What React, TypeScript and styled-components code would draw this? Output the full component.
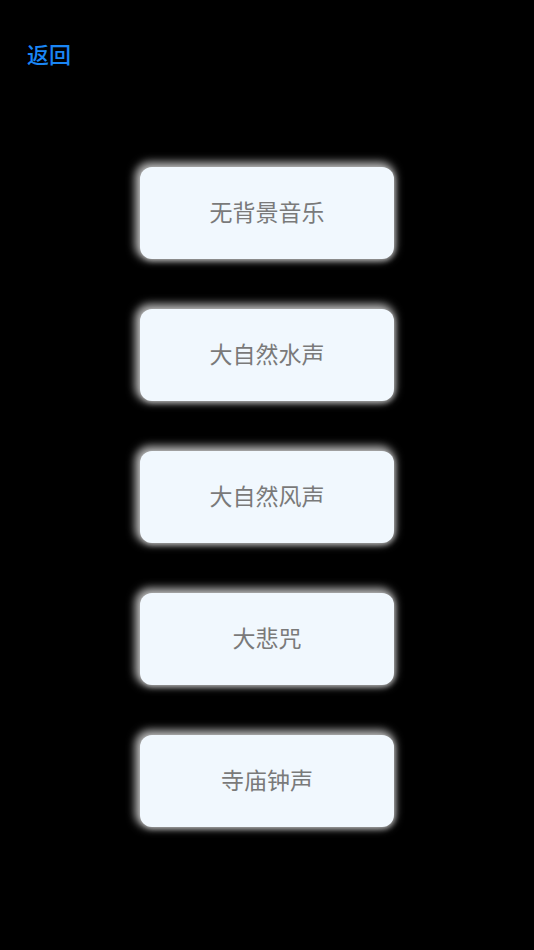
import * as React from "react";
import styled, { createGlobalStyle } from "styled-components";

const GlobalStyle = createGlobalStyle`
  html, body {
    margin: 0;
    padding: 0;
    background: #000;
  }
  body {
    font-family: "Noto Sans CJK SC", "Noto Sans", sans-serif;
  }
`;

const SPage = styled.div`
  width: 534px;
  height: 950px;
  background: #000;
  display: flex;
  flex-direction: column;
`;

const SBack = styled.button`
  align-self: flex-start;
  margin: 36px 0 0 27px;
  padding: 0;
  background: none;
  border: none;
  color: #1a86f5;
  font-family: "Noto Sans CJK SC", sans-serif;
  font-size: 22px;
  font-weight: 500;
  line-height: 34px;
`;

const SList = styled.div`
  display: flex;
  flex-direction: column;
  align-items: center;
  gap: 50px;
  margin-top: 97px;
`;

const SOption = styled.button`
  width: 254px;
  height: 92px;
  padding: 0 0 4px;
  border: none;
  border-radius: 12px;
  background: #f1f8fe;
  color: #7a7a7a;
  font-family: "Noto Sans CJK SC", sans-serif;
  font-size: 23px;
  box-shadow: -2px -2px 8px 3px rgba(255, 255, 255, 0.7),
    1px 2px 5px rgba(120, 120, 120, 0.8);
`;

const options = ["无背景音乐", "大自然水声", "大自然风声", "大悲咒", "寺庙钟声"];

export default function App() {
  return (
    <SPage>
      <GlobalStyle />
      <SBack type="button">返回</SBack>
      <SList>
        {options.map((o) => (
          <SOption key={o} type="button">
            {o}
          </SOption>
        ))}
      </SList>
    </SPage>
  );
}
